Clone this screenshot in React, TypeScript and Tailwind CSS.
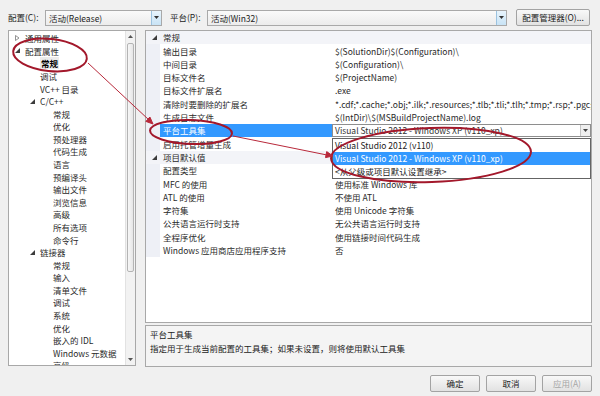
import React from 'react';

// ── Data ──────────────────────────────────────────────────────────────────────

type TreeItem = { t: string; lv: 0 | 1 | 2; tri?: 'open' | 'closed'; sel?: boolean };

const TREE: TreeItem[] = [
  { t: '通用属性', lv: 0, tri: 'closed' },
  { t: '配置属性', lv: 0, tri: 'open' },
  { t: '常规', lv: 1, sel: true },
  { t: '调试', lv: 1 },
  { t: 'VC++ 目录', lv: 1 },
  { t: 'C/C++', lv: 1, tri: 'open' },
  { t: '常规', lv: 2 },
  { t: '优化', lv: 2 },
  { t: '预处理器', lv: 2 },
  { t: '代码生成', lv: 2 },
  { t: '语言', lv: 2 },
  { t: '预编译头', lv: 2 },
  { t: '输出文件', lv: 2 },
  { t: '浏览信息', lv: 2 },
  { t: '高级', lv: 2 },
  { t: '所有选项', lv: 2 },
  { t: '命令行', lv: 2 },
  { t: '链接器', lv: 1, tri: 'open' },
  { t: '常规', lv: 2 },
  { t: '输入', lv: 2 },
  { t: '清单文件', lv: 2 },
  { t: '调试', lv: 2 },
  { t: '系统', lv: 2 },
  { t: '优化', lv: 2 },
  { t: '嵌入的 IDL', lv: 2 },
  { t: 'Windows 元数据', lv: 2 },
  { t: '高级', lv: 2 },
];

const PAD = ['pl-[5px]', 'pl-[20px]', 'pl-[33px]'];

type GridRow = { cat?: string; n?: string; v?: string; sel?: boolean };

// values hidden under the open drop-down are left empty
const GRID: GridRow[] = [
  { cat: '常规' },
  { n: '输出目录', v: '$(SolutionDir)$(Configuration)\\' },
  { n: '中间目录', v: '$(Configuration)\\' },
  { n: '目标文件名', v: '$(ProjectName)' },
  { n: '目标文件扩展名', v: '.exe' },
  {
    n: '清除时要删除的扩展名',
    v: '*.cdf;*.cache;*.obj;*.ilk;*.resources;*.tlb;*.tli;*.tlh;*.tmp;*.rsp;*.pgc;*.pgd;*.meta',
  },
  { n: '生成日志文件', v: '$(IntDir)\\$(MSBuildProjectName).log' },
  { n: '平台工具集', v: 'Visual Studio 2012 - Windows XP (v110_xp)', sel: true },
  { n: '启用托管增量生成', v: '' },
  { cat: '项目默认值' },
  { n: '配置类型', v: '' },
  { n: 'MFC 的使用', v: '使用标准 Windows 库' },
  { n: 'ATL 的使用', v: '不使用 ATL' },
  { n: '字符集', v: '使用 Unicode 字符集' },
  { n: '公共语言运行时支持', v: '无公共语言运行时支持' },
  { n: '全程序优化', v: '使用链接时间代码生成' },
  { n: 'Windows 应用商店应用程序支持', v: '否' },
];

const TOOLSETS = [
  'Visual Studio 2012 (v110)',
  'Visual Studio 2012 - Windows XP (v110_xp)',
  '<从父级或项目默认设置继承>',
];

// ── Small glyphs ──────────────────────────────────────────────────────────────

function DownArrow({ color = '#333' }: { color?: string }) {
  return (
    <svg width="5" height="3" viewBox="0 0 5 3">
      <path d="M0 0 L5 0 L2.5 3 Z" fill={color} />
    </svg>
  );
}

function UpArrow() {
  return (
    <svg width="5" height="3" viewBox="0 0 5 3">
      <path d="M0 3 L5 3 L2.5 0 Z" fill="#555" />
    </svg>
  );
}

function Tri({ kind }: { kind: 'open' | 'closed' }) {
  if (kind === 'open') {
    return (
      <svg width="5" height="5" viewBox="0 0 5 5">
        <path d="M5 0 L5 5 L0 5 Z" fill="#3c3c3c" />
      </svg>
    );
  }
  return (
    <svg width="5" height="6" viewBox="0 0 5 6">
      <path d="M0.5 0.5 L4 3 L0.5 5.5 Z" fill="none" stroke="#777" strokeWidth="0.8" />
    </svg>
  );
}

// ── Pieces ────────────────────────────────────────────────────────────────────

function Combo({ text, className }: { text: string; className: string }) {
  return (
    <div
      className={`flex h-[16px] items-stretch border border-[#a9a9a9] bg-linear-to-b from-[#fafafa] to-[#ececec] ${className}`}
    >
      <span className="flex-1 pl-[3px] leading-[14px] text-[#222] truncate">{text}</span>
      <span className="flex w-[10px] items-center justify-center border-l border-[#9cc3e0] bg-linear-to-b from-[#e8f4fc] to-[#c8e3f5]">
        <DownArrow />
      </span>
    </div>
  );
}

function Btn({ label, disabled }: { label: string; disabled?: boolean }) {
  return (
    <div
      className={`flex h-[17px] w-[50px] items-center justify-center rounded-[2px] border border-[#a3a3a3] bg-linear-to-b from-[#f8f8f8] to-[#e2e2e2] ${
        disabled ? 'text-[#a6a6a6]' : 'text-[#222]'
      }`}
    >
      {label}
    </div>
  );
}

function TreePanel() {
  return (
    <div className="flex h-[336px] w-[128px] border border-[#a8a8a8] bg-white">
      <div className="flex-1 overflow-hidden pt-[1px]">
        {TREE.map((it, i) => (
          <div key={i} className={`flex h-[12.58px] items-center ${PAD[it.lv]}`}>
            <span className="flex w-[11px] items-center pl-[1px]">{it.tri && <Tri kind={it.tri} />}</span>
            <span
              className={`whitespace-nowrap leading-[12px] ${
                it.sel ? 'bg-[#ececec] px-[1px] font-semibold text-black' : 'text-[#2a2a2a]'
              }`}
            >
              {it.t}
            </span>
          </div>
        ))}
      </div>
      {/* scrollbar */}
      <div className="flex w-[10px] flex-col border-l border-[#e2e2e2] bg-[#f2f2f2]">
        <div className="flex h-[11px] items-center justify-center">
          <UpArrow />
        </div>
        <div className="mx-[1px] mt-[1px] h-[229px] rounded-[2px] border border-[#b4b4b4] bg-linear-to-r from-[#f7f7f7] to-[#e6e6e6]" />
        <div className="flex-1" />
        <div className="flex h-[11px] items-center justify-center">
          <DownArrow color="#555" />
        </div>
      </div>
    </div>
  );
}

function PropertyGrid() {
  return (
    <div className="h-[293px] overflow-hidden border border-[#a8a8a8] bg-white">
      {GRID.map((r, i) =>
        r.cat ? (
          <div key={i} className="flex h-[13.3px] items-center bg-[#f3f4f8]">
            <span className="flex w-[14px] items-center justify-center pl-[2px]">
              <Tri kind="open" />
            </span>
            <span className="pl-[3px] leading-[13px] text-[#2a2a2a]">{r.cat}</span>
          </div>
        ) : (
          <div key={i} className="flex h-[13.3px] items-stretch">
            <span className="w-[14px] bg-[#eef0f6]" />
            <span
              className={`flex w-[172px] items-center whitespace-nowrap pl-[3px] ${
                r.sel ? 'bg-[#3399ff] text-white' : 'text-[#2a2a2a]'
              }`}
            >
              {r.n}
            </span>
            {r.sel ? (
              <span className="flex flex-1 items-stretch border border-[#8e8e8e] bg-white">
                <span className="flex flex-1 items-center whitespace-nowrap pl-[2px] text-[#333]">{r.v}</span>
                <span className="flex w-[10px] items-center justify-center border-l border-[#c4c4c4] bg-[#efefef]">
                  <DownArrow color="#444" />
                </span>
              </span>
            ) : (
              <span className="flex min-w-0 flex-1 items-center overflow-hidden whitespace-nowrap pl-[3px] text-[#2a2a2a]">
                {r.v}
              </span>
            )}
          </div>
        ),
      )}
    </div>
  );
}

function Annotations() {
  return (
    <svg className="pointer-events-none absolute left-0 top-0" width="600" height="396" viewBox="0 0 600 396">
      <g fill="none" stroke="#a3182b" strokeWidth="2">
        <ellipse cx="50" cy="55" rx="37" ry="16" transform="rotate(6 50 55)" />
        <ellipse cx="191" cy="132" rx="41" ry="12" transform="rotate(2 191 132)" />
        <ellipse cx="431" cy="155" rx="100" ry="27" transform="rotate(-2 431 155)" />
      </g>
      <g stroke="#b8283a" strokeWidth="1" fill="#b8283a">
        <line x1="88" y1="63" x2="149" y2="120" />
        <polygon points="153,124 145.9,121.4 149.9,117" />
        <line x1="233" y1="136" x2="327" y2="155" />
        <polygon points="333,156 325.5,157.6 326.7,151.6" />
      </g>
    </svg>
  );
}

// ── Page ──────────────────────────────────────────────────────────────────────

export default function App() {
  return (
    <div className="relative h-[396px] w-[600px] overflow-hidden bg-[#f0f0f0] text-[8.5px] font-['Noto_Sans_CJK_SC',sans-serif] text-[#222]">
      {/* Toolbar */}
      <div className="flex items-center pl-[8px] pt-[9px]">
        <span className="w-[37px] whitespace-nowrap">配置(C):</span>
        <Combo text="活动(Release)" className="w-[117px]" />
        <span className="ml-[8px] w-[37px] whitespace-nowrap">平台(P):</span>
        <Combo text="活动(Win32)" className="w-[300px]" />
        <div className="ml-[9px] flex h-[17px] w-[74px] items-center justify-center rounded-[2px] border border-[#a3a3a3] bg-linear-to-b from-[#f8f8f8] to-[#e2e2e2] whitespace-nowrap">
          配置管理器(O)...
        </div>
      </div>

      {/* Main */}
      <div className="mt-[4px] flex gap-[9px] pl-[8px]">
        <TreePanel />
        <div className="flex w-[447px] flex-col gap-[2px]">
          <PropertyGrid />
          <div className="h-[42px] border border-[#a8a8a8] bg-[#f4f4f4] pl-[4px] pt-[1px] leading-[14px]">
            <div>平台工具集</div>
            <div>指定用于生成当前配置的工具集；如果未设置，则将使用默认工具集</div>
          </div>
        </div>
      </div>

      {/* Buttons */}
      <div className="mt-[8px] flex justify-end gap-[6px] pr-[8px]">
        <Btn label="确定" />
        <Btn label="取消" />
        <Btn label="应用(A)" disabled />
      </div>

      {/* Toolset drop-down list */}
      <div className="absolute left-[332px] top-[138px] w-[259px] border border-[#646464] bg-white">
        {TOOLSETS.map((t, i) => (
          <div
            key={i}
            className={`flex h-[13px] items-center whitespace-nowrap pl-[2px] ${
              i === 1 ? 'bg-[#3399ff] text-white' : 'text-[#222]'
            }`}
          >
            {t}
          </div>
        ))}
      </div>

      <Annotations />
    </div>
  );
}
